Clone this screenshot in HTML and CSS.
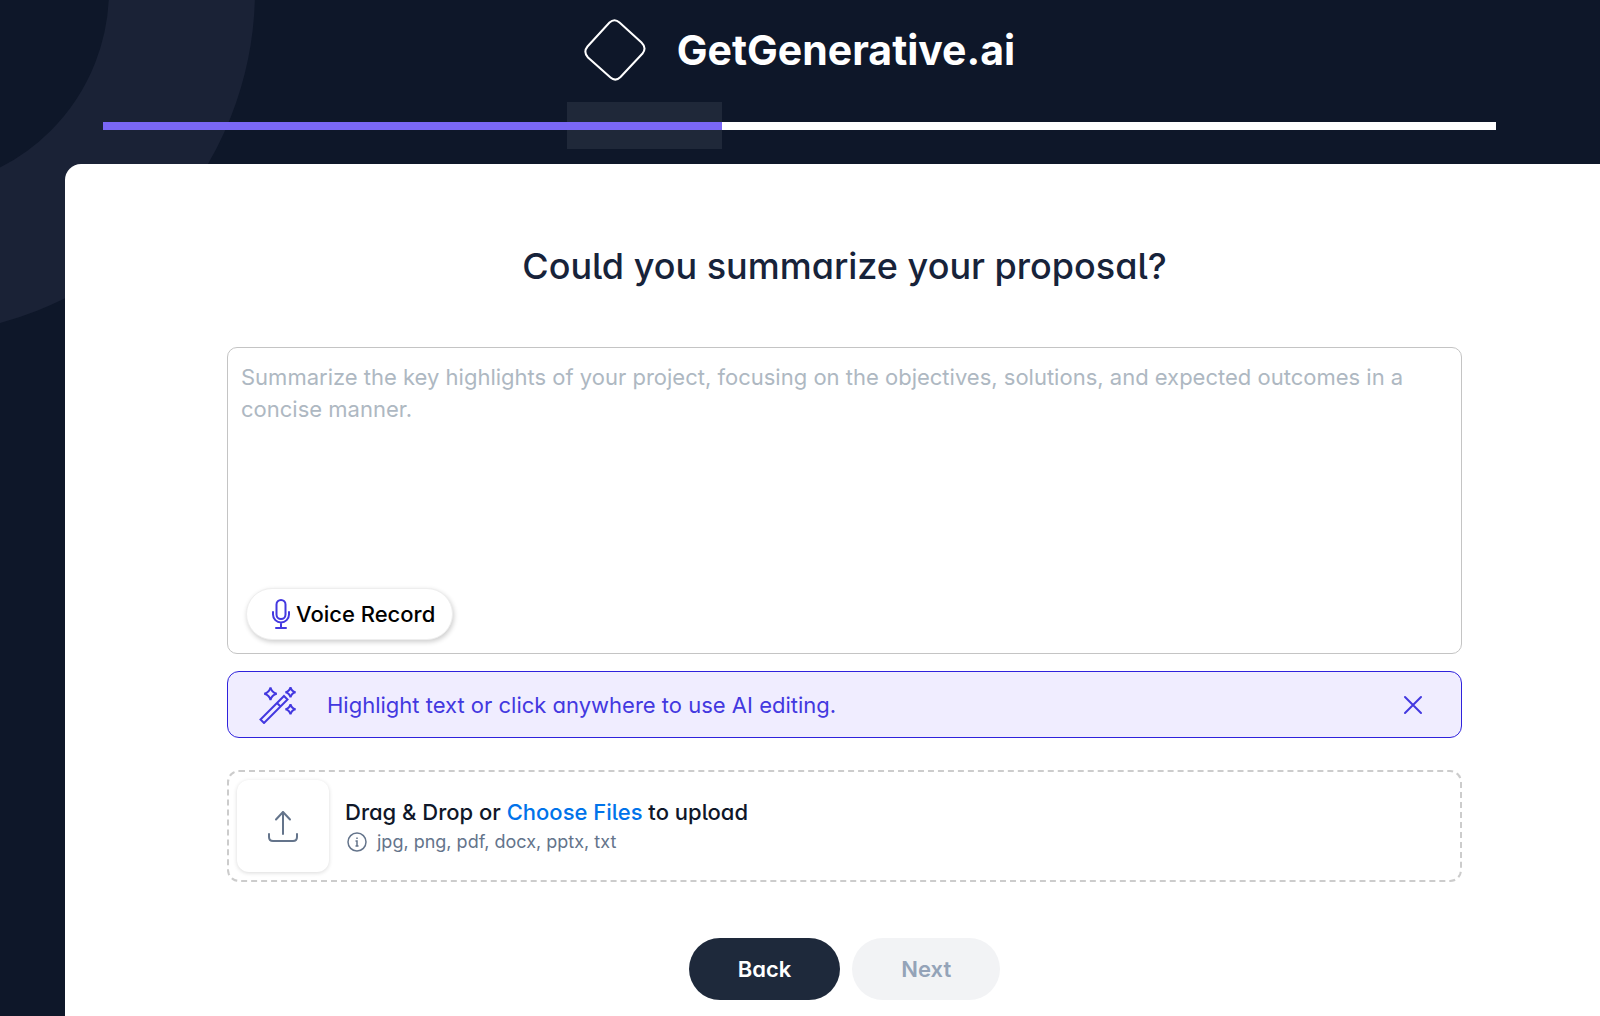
FILE: index.html
```html
<!DOCTYPE html>
<html lang="en">
<head>
    <meta charset="UTF-8">
    <title>GetGenerative.ai</title>
    <meta name="viewport" content="width=device-width, initial-scale=1">
    <link rel="stylesheet" href="styles.css">
</head>
<body>
    <div class="ring"></div>
    <header class="header">
      <div class="brand">
        <svg class="logo" width="62" height="62" viewBox="0 0 62 62" fill="none" stroke="#fff" stroke-width="2" aria-hidden="true">
          <path d="M25.5 3.500Q30.500 -1 35.500 3.500L57.500 23.500Q63 29 58.500 34.500L36.500 58Q31.500 63 26.500 58.500L4 38.500Q-1 33 3.500 27.500Z"/>
        </svg>
        <span class="brand-name">GetGenerative.ai</span>
      </div>
      <div class="steps" role="progressbar" aria-label="Progress" aria-valuemin="0" aria-valuemax="9" aria-valuenow="4">
        <span class="step done"></span>
        <span class="step done"></span>
        <span class="step done"></span>
        <span class="step done current"></span>
        <span class="step"></span>
        <span class="step"></span>
        <span class="step"></span>
        <span class="step"></span>
        <span class="step"></span>
      </div>
    </header>
    <main class="card">
      <h1 class="title"><label for="summary">Could you summarize your proposal?</label></h1>

      <div class="editor">
        <textarea id="summary" class="summary" placeholder="Summarize the key highlights of your project, focusing on the objectives, solutions, and expected outcomes in a concise manner."></textarea>
        <button type="button" class="voice">
          <svg width="20" height="32" viewBox="0 0 20 32" fill="none" stroke="#4338e0" stroke-width="2" stroke-linecap="round" aria-hidden="true">
            <rect x="5.500" y="2" width="9" height="19" rx="4.500"/>
            <path d="M2 14v2.500a8 8 0 0 0 16 0V14M10 24.500V30M5 30h10"/>
          </svg>
          Voice Record
        </button>
      </div>

      <div class="hint">
        <svg width="38" height="38" viewBox="0 0 38 38" fill="none" stroke="#4338e0" stroke-width="2" aria-hidden="true">
          <path d="M25 10l3.500 3.500L5 37l-3.500-3.500zM18 17l3.500 3.500"/>
          <path d="M11.500 1.500q1.200 5 6.200 6.200q-5 1.200-6.200 6.200q-1.200-5-6.200-6.200q5-1.200 6.200-6.200z"/>
          <path d="M31.500 1.300q1 4 5 5q-4 1-5 5q-1-4-5-5q4-1 5-5z"/>
          <path d="M31.500 18.300q1 4 5 5q-4 1-5 5q-1-4-5-5q4-1 5-5z"/>
        </svg>
        <span class="hint-text">Highlight text or click anywhere to use AI editing.</span>
        <button type="button" class="close" aria-label="Close">
          <svg width="20" height="20" viewBox="0 0 20 20" stroke="#4338e0" stroke-width="2" stroke-linecap="round">
            <path d="M2 2l16 16M18 2L2 18"/>
          </svg>
        </button>
      </div>

      <div class="dropzone">
        <div class="upload-icon">
          <svg width="32" height="32" viewBox="0 0 32 32" fill="none" stroke="#64748b" stroke-width="2" stroke-linecap="round" stroke-linejoin="round" aria-hidden="true">
            <path d="M16 24V2M9 9.500L16 2l7 7.500M2 24v3q0 4 4 4h20q4 0 4-4v-3"/>
          </svg>
        </div>
        <div class="upload-text">
          <div class="upload-title">Drag &amp; Drop or <a href="#">Choose Files</a> to upload</div>
          <div class="upload-types">
            <svg width="20" height="20" viewBox="0 0 20 20" fill="none" stroke="#64748b" stroke-width="1.500" aria-hidden="true">
              <circle cx="10" cy="10" r="9"/>
              <path d="M8.500 9h1.500v5M8.500 14h3M10 5.500v1.500"/>
            </svg>
            jpg, png, pdf, docx, pptx, txt
          </div>
        </div>
      </div>

      <div class="actions">
        <button type="button" class="btn back">Back</button>
        <button type="button" class="btn next" disabled>Next</button>
      </div>
    </main>
</body>
</html>
```
FILE: styles.css
```css
* {
  box-sizing: border-box;
}
body {
  font-family: Inter, 'Liberation Sans', sans-serif;
  background: #0e1729;
  color: #0f1729;
  margin: 0;
  min-height: 100vh;
  display: flex;
  flex-direction: column;
  position: relative;
  overflow-x: hidden;
}
button, textarea {
  font-family: inherit;
}
svg {
  display: block;
  flex: none;
}
/* big circle behind the header */
.ring {
  position: absolute;
  left: -435px;
  top: -355px;
  width: 690px;
  height: 690px;
  border: 146px solid #1a2236;
  border-radius: 50%;
}
.header {
  position: relative;
  padding: 18px 104px 15px 103px;
}
.brand {
  display: flex;
  align-items: center;
  justify-content: center;
  gap: 31px;
  height: 64px;
}
.brand-name {
  color: #fff;
  font-size: 41px;
  font-weight: 700;
}
.steps {
  display: flex;
  margin-top: 20px;
}
.step {
  flex: 1;
  height: 47px;
  padding: 20px 0;
}
.step::before {
  content: "";
  display: block;
  height: 8px;
  background: #fff;
}
.step.done::before {
  background: #7a67f5;
}
.step.current {
  background: #1f2839;
}
.card {
  position: relative;
  flex: 1;
  margin-left: 65px;
  padding: 78px 138px 16px 162px;
  background: #fff;
  border-top-left-radius: 16px;
}
/* single-storey a, l with a tail */
.title, .upload-text, .back {
  font-feature-settings: "cv11", "cv05";
}
.hint-text {
  font-feature-settings: "cv11";
}
.title {
  margin: 0;
  font-size: 36px;
  line-height: 48px;
  font-weight: 500;
  text-align: center;
  color: #17233a;
}
.editor {
  margin-top: 57px;
  padding: 13px;
  border: 1px solid #c4c4c4;
  border-radius: 10px;
}
.summary {
  display: block;
  width: 100%;
  height: 227px;
  padding: 0;
  border: 0;
  outline: 0;
  resize: none;
  background: none;
  font-size: 22px;
  line-height: 32px;
  color: #0f1729;
}
.summary::placeholder {
  color: #aeb8c2;
}
.voice {
  display: flex;
  align-items: center;
  gap: 5px;
  height: 52px;
  margin-left: 5px;
  padding: 0 17px 0 24px;
  border: 1px solid #eee;
  border-radius: 26px;
  background: #fff;
  box-shadow: 1px 2px 5px rgba(0, 0, 0, 0.2);
  font-size: 22px;
  font-weight: 500;
  color: #000;
  cursor: pointer;
}
.hint {
  display: flex;
  align-items: center;
  margin-top: 17px;
  height: 67px;
  padding: 0 38px 0 31px;
  border: 1px solid #2f22dc;
  border-radius: 12px;
  background: #f0edff;
}
.hint-text {
  flex: 1;
  margin-left: 30px;
  font-size: 22px;
  color: #4338e0;
}
.close {
  padding: 0;
  border: 0;
  background: none;
  cursor: pointer;
}
.dropzone {
  display: flex;
  align-items: center;
  gap: 16px;
  margin-top: 32px;
  padding: 8px;
  border: 2px dashed #ccc;
  border-radius: 12px;
}
.upload-icon {
  display: flex;
  align-items: center;
  justify-content: center;
  width: 92px;
  height: 92px;
  border-radius: 12px;
  box-shadow: 0 1px 4px rgba(0, 0, 0, 0.15);
}
.upload-title {
  font-size: 22px;
  line-height: 32px;
  font-weight: 500;
}
.upload-title a {
  color: #0073ea;
  text-decoration: none;
}
.upload-types {
  display: flex;
  align-items: center;
  gap: 10px;
  padding-left: 2px;
  font-size: 18px;
  line-height: 28px;
  color: #64748b;
}
.actions {
  display: flex;
  justify-content: center;
  gap: 12px;
  margin-top: 56px;
}
.btn {
  height: 62px;
  padding: 0 49px;
  border: 0;
  border-radius: 31px;
  font-size: 22px;
  font-weight: 600;
  cursor: pointer;
}
.back {
  background: #1e293b;
  color: #fff;
}
.next {
  background: #f2f3f5;
  color: #94a3b8;
  cursor: default;
}
```
